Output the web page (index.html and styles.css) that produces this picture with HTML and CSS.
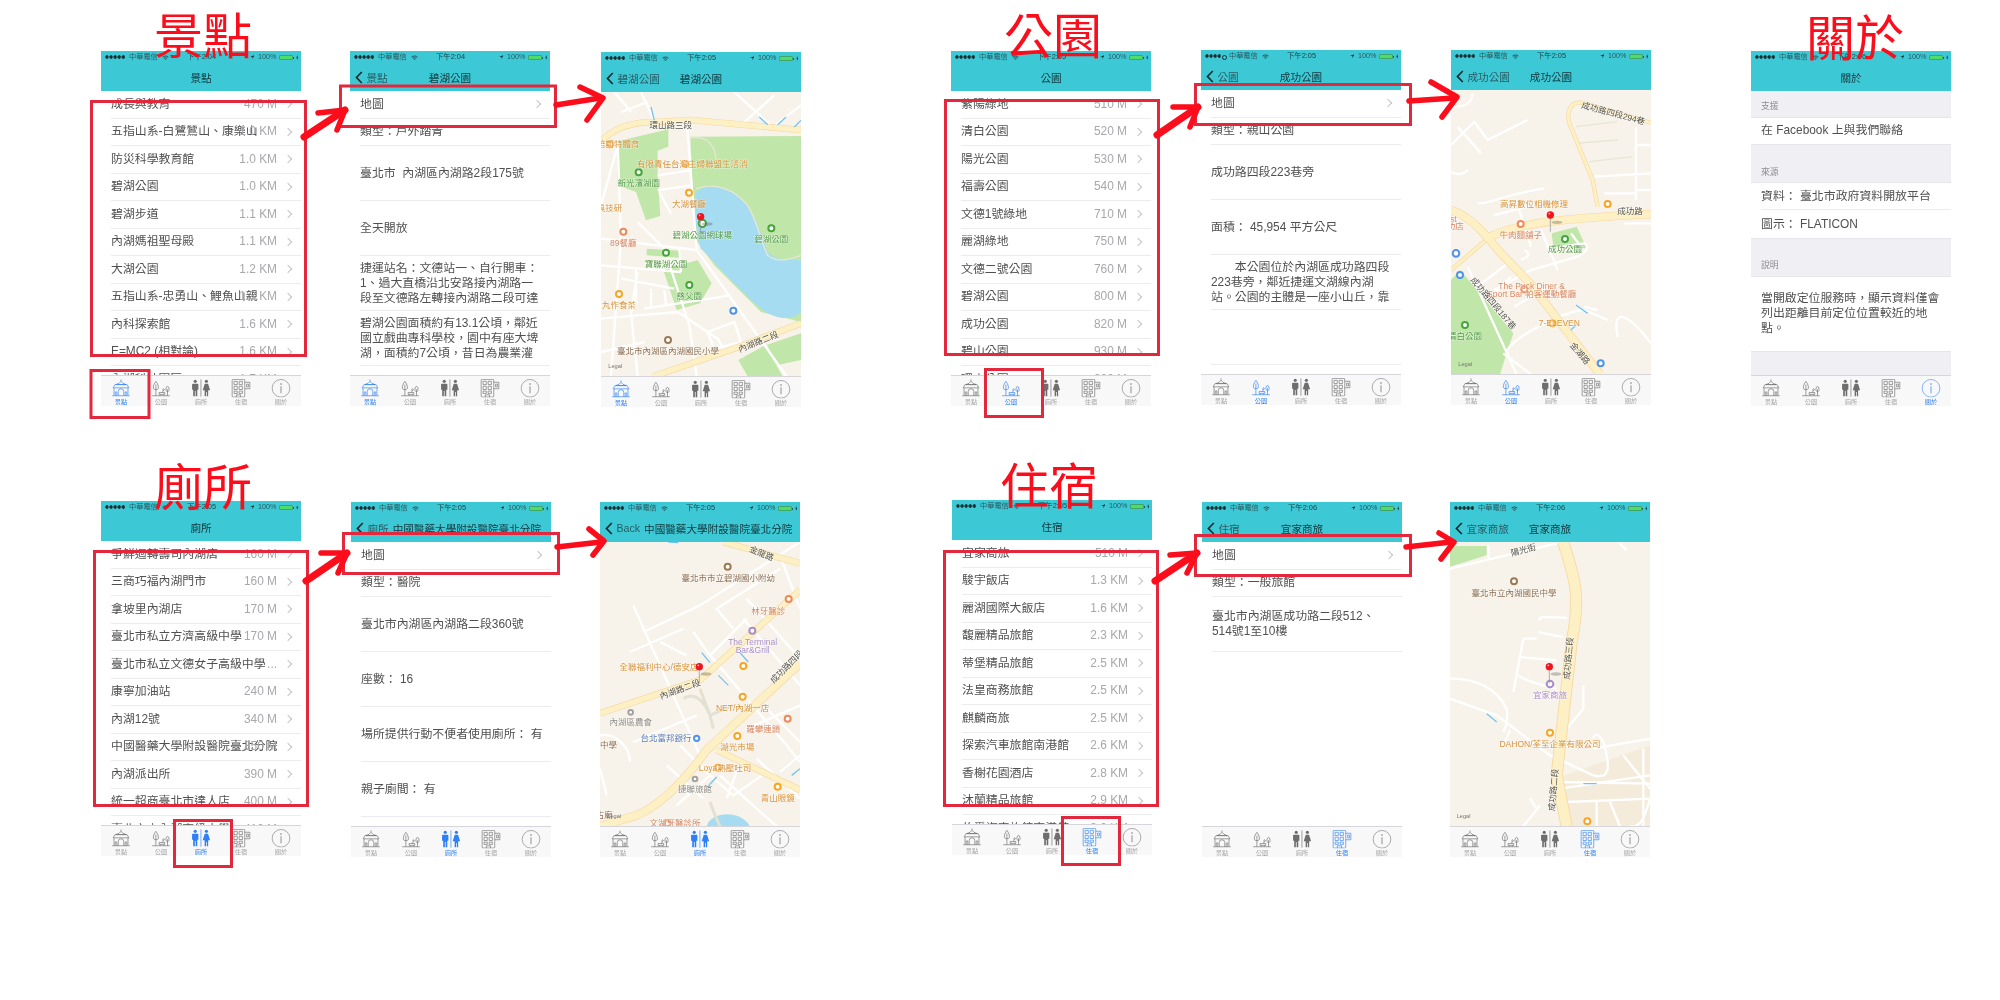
FILE: index.html
```html
<!DOCTYPE html>
<html lang="zh-Hant">
<head>
    <meta charset="UTF-8">
    <title>App 畫面流程</title>
    <link rel="stylesheet" href="styles.css">
</head>
<body>
<svg class="sprite" aria-hidden="true">
    <symbol id="i-hall" viewBox="0 0 20 20"><g fill="none" stroke="currentColor" stroke-width=".7"><path d="M10 .5V2.5M4.5 6Q8.5 5 10 2.5 11.5 5 15.5 6ZM1.5 9.5 3.5 6H16.5L18.5 9.5ZM2.5 9.5V17.5M17.5 9.5V17.5M.5 18H19.5M7 18V13.5A3 3 0 0 1 13 13.5V18M3.8 18V14A1.3 1.3 0 0 1 5.5 14V18M14.5 18V14A1.3 1.3 0 0 1 16.2 14V18"/></g></symbol>
    <symbol id="i-park" viewBox="0 0 20 20"><g fill="none" stroke="currentColor" stroke-width=".7"><path d="M4.5 2.5C6.5 5 7.5 8 7.2 10 7 12 2 12 1.8 10 1.5 8 2.5 5 4.5 2.5ZM4.5 6V18M.5 18H19.5M8 14.5H14V16.5H8ZM9 16.5V18M13 16.5V18M17 8C18.5 8 19 11 18.5 12.5 18 14 16 14 15.5 12.5 15 11 15.5 8 17 8ZM17 11V18M12 11.5A.8.8 0 1 0 12 11.4M12 12.5V14.5"/></g></symbol>
    <symbol id="i-wc" viewBox="0 0 20 20"><g fill="currentColor"><circle cx="3.8" cy="2.5" r="1.7"/><path d="M1.2 5H6.4Q7.2 5 7.2 6V11.5H6V18.5H4.2V13H3.4V18.5H1.6V11.5H.4V6Q.4 5 1.2 5Z"/><circle cx="15.8" cy="2.5" r="1.7"/><path d="M14 5H17.6L19.8 12H17.7V18.5H16.2V14H15.4V18.5H13.9V12H11.8Z"/><rect x="9.6" y=".5" width=".7" height="18.5"/></g></symbol>
    <symbol id="i-hotel" viewBox="0 0 20 20"><g fill="none" stroke="currentColor" stroke-width=".7"><rect x=".5" y=".4" width="13.5" height="19" rx="1"/><path d="M14 3.5H19.5V10.5H14M16 5.5H18V8.5H16ZM2.5 2.5H6V6H2.5ZM8 2.5H11.5V6H8ZM2.5 7.8H6V11.3H2.5ZM8 7.8H11.5V11.3H8ZM2.5 13H6V15.5H2.5ZM8 13H11.5V15.5H8ZM5 19.4V17H9.5V19.4"/></g></symbol>
    <symbol id="i-info" viewBox="0 0 20 20"><circle cx="10" cy="10" r="9.5" fill="none" stroke="currentColor" stroke-width=".6"/><circle cx="10" cy="5.3" r=".8" fill="currentColor"/><rect x="9.6" y="7.8" width=".8" height="7.5" fill="currentColor"/></symbol>
    <symbol id="i-wifi" viewBox="0 0 8 6"><path d="M.3 2Q4-1 7.7 2L7 2.8Q4 .4 1 2.8ZM1.6 3.4Q4 1.5 6.4 3.4L5.7 4.1Q4 2.9 2.3 4.1ZM3 4.8Q4 4 5 4.8L4 5.8Z" fill="currentColor"/></symbol>
    <symbol id="i-loc" viewBox="0 0 6 6"><path d="M5.8.2 .2 2.7H3.3V5.8Z" fill="currentColor"/></symbol>
    <symbol id="i-bolt" viewBox="0 0 3 6"><path d="M2 0 .2 3.3H1.3L1 6 2.8 2.6H1.7Z" fill="currentColor"/></symbol>
    <symbol id="i-back" viewBox="0 0 8 13"><path d="M6.8 1 1.5 6.5 6.8 12" fill="none" stroke="currentColor" stroke-width="1.7"/></symbol>
    <g id="m-pin">
        <ellipse class="m-shadow" cx="20" cy="22" rx="16" ry="5"/>
        <path class="m-stem" d="M0 8V50"/>
        <circle class="m-head" r="11"/>
        <circle class="m-shine" cx="-3" cy="-4" r="2.5"/>
    </g>
</svg>

<main class="sheet">
    <h1 class="tag tag-spot">景點</h1>
    <h1 class="tag tag-park">公園</h1>
    <h1 class="tag tag-about">關於</h1>
    <h1 class="tag tag-wc">廁所</h1>
    <h1 class="tag tag-hotel">住宿</h1>

    <!-- 景點 -->
    <section class="phone spot-list">
        <div class="status"><div class="st-left"><i class="signal"></i><span>中華電信</span><svg class="wifi"><use href="#i-wifi"/></svg></div><span class="clock">下午2:04</span><div class="st-right"><svg class="loc"><use href="#i-loc"/></svg><span>100%</span><i class="batt"></i><svg class="bolt"><use href="#i-bolt"/></svg></div></div>
        <header class="nav"><span></span><b class="nav-title">景點</b><span></span></header>
        <div class="body">
            <div class="row"><span class="name">成長與教育</span><span class="dist">470 M</span><i class="chev"></i></div>
            <div class="row"><span class="name">五指山系-白鷺鷥山、康樂山</span><span class="dist">1.0 KM</span><i class="chev"></i></div>
            <div class="row"><span class="name">防災科學教育館</span><span class="dist">1.0 KM</span><i class="chev"></i></div>
            <div class="row"><span class="name">碧湖公園</span><span class="dist">1.0 KM</span><i class="chev"></i></div>
            <div class="row"><span class="name">碧湖步道</span><span class="dist">1.1 KM</span><i class="chev"></i></div>
            <div class="row"><span class="name">內湖媽祖聖母殿</span><span class="dist">1.1 KM</span><i class="chev"></i></div>
            <div class="row"><span class="name">大湖公園</span><span class="dist">1.2 KM</span><i class="chev"></i></div>
            <div class="row"><span class="name">五指山系-忠勇山、鯉魚山親</span><span class="dist">1.3 KM</span><i class="chev"></i></div>
            <div class="row"><span class="name">內科探索館</span><span class="dist">1.6 KM</span><i class="chev"></i></div>
            <div class="row"><span class="name">E=MC2 (相對論)</span><span class="dist">1.6 KM</span><i class="chev"></i></div>
            <div class="row"><span class="name">內湖科技園區</span><span class="dist">1.7 KM</span><i class="chev"></i></div>
        </div>
        <nav class="tabs"><a class="tab on"><svg><use href="#i-hall"/></svg>景點</a><a class="tab"><svg><use href="#i-park"/></svg>公園</a><a class="tab"><svg><use href="#i-wc"/></svg>廁所</a><a class="tab"><svg><use href="#i-hotel"/></svg>住宿</a><a class="tab"><svg><use href="#i-info"/></svg>關於</a></nav>
    </section>

    <section class="phone spot-detail">
        <div class="status"><div class="st-left"><i class="signal"></i><span>中華電信</span><svg class="wifi"><use href="#i-wifi"/></svg></div><span class="clock">下午2:04</span><div class="st-right"><svg class="loc"><use href="#i-loc"/></svg><span>100%</span><i class="batt"></i><svg class="bolt"><use href="#i-bolt"/></svg></div></div>
        <header class="nav"><a class="back"><svg><use href="#i-back"/></svg>景點</a><b class="nav-title">碧湖公園</b><span></span></header>
        <div class="body">
            <div class="row"><span class="name">地圖</span><i class="chev"></i></div>
            <div class="row"><span class="name">類型：戶外踏青</span></div>
            <div class="row tall"><span class="name">臺北市&nbsp; 內湖區內湖路2段175號</span></div>
            <div class="row tall"><span class="name">全天開放</span></div>
            <div class="row tall"><span class="name">捷運站名：文德站一、自行開車：<br>1、過大直橋沿北安路接內湖路一<br>段至文德路左轉接內湖路二段可達</span></div>
            <div class="row tall"><span class="name">碧湖公園面積約有13.1公頃，鄰近<br>國立戲曲專科學校，園中有座大埤<br>湖，面積約7公頃，昔日為農業灌</span></div>
        </div>
        <nav class="tabs"><a class="tab on"><svg><use href="#i-hall"/></svg>景點</a><a class="tab"><svg><use href="#i-park"/></svg>公園</a><a class="tab"><svg><use href="#i-wc"/></svg>廁所</a><a class="tab"><svg><use href="#i-hotel"/></svg>住宿</a><a class="tab"><svg><use href="#i-info"/></svg>關於</a></nav>
    </section>

    <section class="phone spot-map">
        <div class="status"><div class="st-left"><i class="signal"></i><span>中華電信</span><svg class="wifi"><use href="#i-wifi"/></svg></div><span class="clock">下午2:05</span><div class="st-right"><svg class="loc"><use href="#i-loc"/></svg><span>100%</span><i class="batt"></i><svg class="bolt"><use href="#i-bolt"/></svg></div></div>
        <header class="nav"><a class="back"><svg><use href="#i-back"/></svg>碧湖公園</a><b class="nav-title">碧湖公園</b><span></span></header>
        <div class="body">
            <svg class="map" viewBox="0 0 600 853">
                <path class="m-green" d="M268 134 L600 132 V690 L480 660 L340 520 L282 440Z"/>
                <path class="m-green" d="M50 148 L202 112 V164 L170 176 L170 250 L178 372 L135 385 L105 300 L50 280Z"/>
                <path class="m-green" d="M137 470 L240 476 V498 L137 490Z"/>
                <path class="m-green" d="M187 534 L290 504 L332 574 L297 634 L227 654Z"/>
                <path class="m-green" d="M412 804 L492 760 L545 853 H440Z"/>
                <path class="m-green" d="M498 758 L600 724 V804 L527 820Z"/>
                <path class="m-water" d="M285 300 C320 270 380 285 420 320 C470 370 480 430 500 480 C530 510 570 500 600 505 V660 C570 690 520 680 480 650 C420 600 350 520 300 470 C285 440 280 340 285 300Z"/>
                <path class="m-trail" d="M268 138 C320 130 345 160 345 210M285 290 C340 270 400 290 440 340 C470 390 480 450 500 490 C530 515 570 500 600 490"/>
                <path class="m-st" d="M40 0 L90 60 M60 60 L140 30 M120 0 L160 85 M400 0 L510 100 M430 90 L520 10 M520 100 L600 40 M257 84 L287 474 L557 853 M0 340 L50 160 M50 150 L60 440 L30 853 M0 440 L287 474 M170 250 L265 235 M170 295 L270 280 M175 300 L210 365 M110 390 L190 470 L265 700 L287 853 M235 470 L240 540 M0 520 L240 540 M60 560 L220 590 M130 650 L390 610 M110 540 L90 660 L110 853 M320 720 L400 690 L420 750 L340 770Z M0 680 L110 670 L230 660 L350 740 L380 790 M0 780 L130 750 M105 530 V640 M150 590 V650 M190 595 L195 640"/>
                <path class="m-edge" d="M0 148 C40 110 70 100 120 92 L270 84 L600 114M157 853 L387 774 L600 694"/>
                <path class="m-main" d="M0 148 C40 110 70 100 120 92 L270 84 L600 114M157 853 L387 774 L600 694"/>
                <path class="m-arrow" d="M150 45 L160 85M475 75 L500 98M555 75 L530 98M600 85 L580 105"/>
                <circle class="poi o" cx="27" cy="157" r="9"/><circle class="poi o" cx="253" cy="216" r="9"/><circle class="poi o" cx="264" cy="302" r="9"/><circle class="poi o" cx="54" cy="606" r="9"/><circle class="poi r" cx="67" cy="419" r="9"/>
                <circle class="poi g" cx="113" cy="241" r="9"/><circle class="poi g" cx="511" cy="409" r="9"/><circle class="poi g" cx="195" cy="482" r="9"/><circle class="poi g" cx="265" cy="579" r="9"/><circle class="poi g" cx="304" cy="394" r="11"/>
                <circle class="poi b" cx="397" cy="656" r="9"/><circle class="poi br" cx="201" cy="744" r="9"/>
                <text class="m-l k" x="209" y="100">環山路三段</text>
                <text class="m-l o" x="52" y="157" text-anchor="start">倍斯特體育</text>
                <text class="m-l o" x="274" y="216" text-anchor="start">有限責任台灣主婦聯盟生活消</text>
                <text class="m-l g" x="113" y="274">新光濱湖園</text>
                <text class="m-l o" x="264" y="336">大湖餐廳</text>
                <text class="m-l o" x="0" y="349" text-anchor="start">禮釣具技研</text>
                <text class="m-l r" x="67" y="452">89餐廳</text>
                <text class="m-l g" x="304" y="429">碧湖公園網球場</text>
                <text class="m-l g" x="511" y="441">碧湖公園</text>
                <text class="m-l g" x="195" y="516">寶聯湖公園</text>
                <text class="m-l g" x="265" y="612">慈父園</text>
                <text class="m-l o" x="54" y="639">丸作食茶</text>
                <text class="m-l br" x="201" y="777">臺北市內湖區內湖國民小學</text>
                <text class="m-l k" transform="translate(472 749) rotate(-22)">內湖路二段</text>
                <text class="m-legal" x="22" y="827">Legal</text>
                <use href="#m-pin" x="299" y="374"/>
            </svg>
        </div>
        <nav class="tabs"><a class="tab on"><svg><use href="#i-hall"/></svg>景點</a><a class="tab"><svg><use href="#i-park"/></svg>公園</a><a class="tab"><svg><use href="#i-wc"/></svg>廁所</a><a class="tab"><svg><use href="#i-hotel"/></svg>住宿</a><a class="tab"><svg><use href="#i-info"/></svg>關於</a></nav>
    </section>

    <!-- 公園 -->
    <section class="phone park-list">
        <div class="status"><div class="st-left"><i class="signal"></i><span>中華電信</span><svg class="wifi"><use href="#i-wifi"/></svg></div><span class="clock">下午2:05</span><div class="st-right"><svg class="loc"><use href="#i-loc"/></svg><span>100%</span><i class="batt"></i><svg class="bolt"><use href="#i-bolt"/></svg></div></div>
        <header class="nav"><span></span><b class="nav-title">公園</b><span></span></header>
        <div class="body">
            <div class="row"><span class="name">紫陽綠地</span><span class="dist">510 M</span><i class="chev"></i></div>
            <div class="row"><span class="name">清白公園</span><span class="dist">520 M</span><i class="chev"></i></div>
            <div class="row"><span class="name">陽光公園</span><span class="dist">530 M</span><i class="chev"></i></div>
            <div class="row"><span class="name">福壽公園</span><span class="dist">540 M</span><i class="chev"></i></div>
            <div class="row"><span class="name">文德1號綠地</span><span class="dist">710 M</span><i class="chev"></i></div>
            <div class="row"><span class="name">麗湖綠地</span><span class="dist">750 M</span><i class="chev"></i></div>
            <div class="row"><span class="name">文德二號公園</span><span class="dist">760 M</span><i class="chev"></i></div>
            <div class="row"><span class="name">碧湖公園</span><span class="dist">800 M</span><i class="chev"></i></div>
            <div class="row"><span class="name">成功公園</span><span class="dist">820 M</span><i class="chev"></i></div>
            <div class="row"><span class="name">碧山公園</span><span class="dist">930 M</span><i class="chev"></i></div>
            <div class="row"><span class="name">環山公園</span><span class="dist">960 M</span><i class="chev"></i></div>
        </div>
        <nav class="tabs"><a class="tab"><svg><use href="#i-hall"/></svg>景點</a><a class="tab on"><svg><use href="#i-park"/></svg>公園</a><a class="tab"><svg><use href="#i-wc"/></svg>廁所</a><a class="tab"><svg><use href="#i-hotel"/></svg>住宿</a><a class="tab"><svg><use href="#i-info"/></svg>關於</a></nav>
    </section>

    <section class="phone park-detail">
        <div class="status"><div class="st-left"><i class="signal weak"></i><span>中華電信</span><svg class="wifi"><use href="#i-wifi"/></svg></div><span class="clock">下午2:05</span><div class="st-right"><svg class="loc"><use href="#i-loc"/></svg><span>100%</span><i class="batt"></i><svg class="bolt"><use href="#i-bolt"/></svg></div></div>
        <header class="nav"><a class="back"><svg><use href="#i-back"/></svg>公園</a><b class="nav-title">成功公園</b><span></span></header>
        <div class="body">
            <div class="row"><span class="name">地圖</span><i class="chev"></i></div>
            <div class="row"><span class="name">類型：親山公園</span></div>
            <div class="row tall"><span class="name">成功路四段223巷旁</span></div>
            <div class="row tall"><span class="name">面積： 45,954 平方公尺</span></div>
            <div class="row tall"><span class="name">　　本公園位於內湖區成功路四段<br>223巷旁，鄰近捷運文湖線內湖<br>站。公園的主體是一座小山丘，靠</span></div>
            <div class="row tall"></div>
        </div>
        <nav class="tabs"><a class="tab"><svg><use href="#i-hall"/></svg>景點</a><a class="tab on"><svg><use href="#i-park"/></svg>公園</a><a class="tab"><svg><use href="#i-wc"/></svg>廁所</a><a class="tab"><svg><use href="#i-hotel"/></svg>住宿</a><a class="tab"><svg><use href="#i-info"/></svg>關於</a></nav>
    </section>

    <section class="phone park-map">
        <div class="status"><div class="st-left"><i class="signal"></i><span>中華電信</span><svg class="wifi"><use href="#i-wifi"/></svg></div><span class="clock">下午2:05</span><div class="st-right"><svg class="loc"><use href="#i-loc"/></svg><span>100%</span><i class="batt"></i><svg class="bolt"><use href="#i-bolt"/></svg></div></div>
        <header class="nav"><a class="back"><svg><use href="#i-back"/></svg>成功公園</a><b class="nav-title">成功公園</b><span></span></header>
        <div class="body">
            <svg class="map" viewBox="0 0 600 853">
                <path class="m-green" d="M0 570 L27 540 L187 730 L167 790 L147 853 H0Z"/>
                <path class="m-green" d="M302 430 L377 410 L407 475 L307 470Z"/>
                <path class="m-trail" d="M375 110 L500 95M375 160 L500 150M415 215 L545 200"/>
                <path class="m-st" d="M65 10 C60 50 30 50 0 50 M0 165 L70 95 L110 150 L230 90 M20 110 L90 190 M0 245 C25 260 40 250 50 240 M555 110 V330 M555 165 H600 M430 260 L600 250 M460 310 H555 M555 300 H600 M520 400 H600 M80 340 C130 340 130 320 280 295 M195 330 L240 470 M130 375 L270 340 M330 470 L400 460 C420 470 400 490 380 500 L240 540 L130 600 M220 480 C240 490 235 500 210 510 M270 420 L320 540 M360 430 L390 470 M50 530 L200 860 M80 590 L170 520 M110 630 L180 560 M190 650 L290 590 M170 790 C150 760 340 660 400 660 L470 690 M157 790 L240 853 M400 650 L440 660 M500 740 C480 640 540 680 600 760"/>
                <path class="m-edge e-thin" d="M600 98 L400 40 C360 30 345 60 355 100 L425 270 L440 350M0 540 L117 440"/>
                <path class="m-main m-thin" d="M600 98 L400 40 C360 30 345 60 355 100 L425 270 L440 350M0 540 L117 440"/>
                <path class="m-edge e-wide" d="M117 440 C200 400 330 385 600 372M0 360 C60 380 100 430 150 490 L237 580 L447 853"/>
                <path class="m-main m-wide" d="M117 440 C200 400 330 385 600 372M0 360 C60 380 100 430 150 490 L237 580 L447 853"/>
                <path class="m-arrow" d="M375 645 L410 670M360 720 L375 705"/>
                <circle class="poi o" cx="470" cy="342" r="9"/><circle class="poi r" cx="209" cy="402" r="9"/><circle class="poi r" cx="220" cy="598" r="9"/><circle class="poi o" cx="304" cy="700" r="9"/>
                <circle class="poi g" cx="342" cy="447" r="9"/><circle class="poi g" cx="42" cy="705" r="9"/>
                <circle class="poi b" cx="27" cy="555" r="9"/><circle class="poi b" cx="15" cy="490" r="10"/><circle class="poi b" cx="449" cy="820" r="9"/>
                <text class="m-l o" x="249" y="343" text-anchor="start">高昇數位相機修理</text>
                <text class="m-l k" x="537" y="362" text-anchor="start">成功路</text>
                <text class="m-l r" x="0" y="387" text-anchor="start">ust</text>
                <text class="m-l r" x="0" y="408" text-anchor="start">成功店</text>
                <text class="m-l r" x="209" y="436">牛肉麵舖子</text>
                <text class="m-l g" x="342" y="478">成功公園</text>
                <text class="m-l r" x="242" y="588" text-anchor="start">The Puck Diner &amp;</text>
                <text class="m-l r" x="242" y="612" text-anchor="start">Sport Bar 帕客運動餐廳</text>
                <text class="m-l o" x="325" y="700" text-anchor="start">7-ELEVEN</text>
                <text class="m-l g" x="42" y="738">清白公園</text>
                <text class="m-l k" transform="translate(387 790) rotate(50)">金湖路</text>
                <text class="m-l k" transform="translate(127 640) rotate(50)">成功路四段187巷</text>
                <text class="m-l k" transform="translate(487 70) rotate(15)">成功路四段294巷</text>
                <text class="m-legal" x="22" y="827">Legal</text>
                <use href="#m-pin" x="298" y="375"/>
            </svg>
        </div>
        <nav class="tabs"><a class="tab"><svg><use href="#i-hall"/></svg>景點</a><a class="tab on"><svg><use href="#i-park"/></svg>公園</a><a class="tab"><svg><use href="#i-wc"/></svg>廁所</a><a class="tab"><svg><use href="#i-hotel"/></svg>住宿</a><a class="tab"><svg><use href="#i-info"/></svg>關於</a></nav>
    </section>

    <!-- 關於 -->
    <section class="phone about">
        <div class="status"><div class="st-left"><i class="signal"></i><span>中華電信</span><svg class="wifi"><use href="#i-wifi"/></svg></div><span class="clock">下午2:06</span><div class="st-right"><svg class="loc"><use href="#i-loc"/></svg><span>100%</span><i class="batt"></i><svg class="bolt"><use href="#i-bolt"/></svg></div></div>
        <header class="nav"><span></span><b class="nav-title">關於</b><span></span></header>
        <div class="body grouped">
            <h2 class="group-head">支援</h2>
            <div class="group"><div class="row short"><span class="name">在 Facebook 上與我們聯絡</span></div></div>
            <h2 class="group-head">來源</h2>
            <div class="group"><div class="row"><span class="name">資料： 臺北市政府資料開放平台</span></div><div class="row"><span class="name">圖示： FLATICON</span></div></div>
            <h2 class="group-head">說明</h2>
            <div class="group"><div class="row note"><span class="name">當開啟定位服務時，顯示資料僅會<br>列出距離目前定位位置較近的地<br>點。</span></div></div>
        </div>
        <nav class="tabs"><a class="tab"><svg><use href="#i-hall"/></svg>景點</a><a class="tab"><svg><use href="#i-park"/></svg>公園</a><a class="tab"><svg><use href="#i-wc"/></svg>廁所</a><a class="tab"><svg><use href="#i-hotel"/></svg>住宿</a><a class="tab on"><svg><use href="#i-info"/></svg>關於</a></nav>
    </section>

    <!-- 廁所 -->
    <section class="phone wc-list">
        <div class="status"><div class="st-left"><i class="signal"></i><span>中華電信</span><svg class="wifi"><use href="#i-wifi"/></svg></div><span class="clock">下午2:05</span><div class="st-right"><svg class="loc"><use href="#i-loc"/></svg><span>100%</span><i class="batt"></i><svg class="bolt"><use href="#i-bolt"/></svg></div></div>
        <header class="nav"><span></span><b class="nav-title">廁所</b><span></span></header>
        <div class="body">
            <div class="row"><span class="name">爭鮮迴轉壽司內湖店</span><span class="dist">160 M</span><i class="chev"></i></div>
            <div class="row"><span class="name">三商巧福內湖門市</span><span class="dist">160 M</span><i class="chev"></i></div>
            <div class="row"><span class="name">拿坡里內湖店</span><span class="dist">170 M</span><i class="chev"></i></div>
            <div class="row"><span class="name">臺北市私立方濟高級中學</span><span class="dist">170 M</span><i class="chev"></i></div>
            <div class="row"><span class="name">臺北市私立文德女子高級中學</span><span class="dist">...</span><i class="chev"></i></div>
            <div class="row"><span class="name">康寧加油站</span><span class="dist">240 M</span><i class="chev"></i></div>
            <div class="row"><span class="name">內湖12號</span><span class="dist">340 M</span><i class="chev"></i></div>
            <div class="row"><span class="name">中國醫藥大學附設醫院臺北分院</span><span class="dist">350 M</span><i class="chev"></i></div>
            <div class="row"><span class="name">內湖派出所</span><span class="dist">390 M</span><i class="chev"></i></div>
            <div class="row"><span class="name">統一超商臺北市達人店</span><span class="dist">400 M</span><i class="chev"></i></div>
            <div class="row"><span class="name">臺北市立內湖高級中學</span><span class="dist">410 M</span><i class="chev"></i></div>
        </div>
        <nav class="tabs"><a class="tab"><svg><use href="#i-hall"/></svg>景點</a><a class="tab"><svg><use href="#i-park"/></svg>公園</a><a class="tab on"><svg><use href="#i-wc"/></svg>廁所</a><a class="tab"><svg><use href="#i-hotel"/></svg>住宿</a><a class="tab"><svg><use href="#i-info"/></svg>關於</a></nav>
    </section>

    <section class="phone wc-detail">
        <div class="status"><div class="st-left"><i class="signal"></i><span>中華電信</span><svg class="wifi"><use href="#i-wifi"/></svg></div><span class="clock">下午2:05</span><div class="st-right"><svg class="loc"><use href="#i-loc"/></svg><span>100%</span><i class="batt"></i><svg class="bolt"><use href="#i-bolt"/></svg></div></div>
        <header class="nav"><a class="back"><svg><use href="#i-back"/></svg>廁所</a><b class="nav-title">中國醫藥大學附設醫院臺北分院</b><span></span></header>
        <div class="body">
            <div class="row"><span class="name">地圖</span><i class="chev"></i></div>
            <div class="row"><span class="name">類型：醫院</span></div>
            <div class="row tall"><span class="name">臺北市內湖區內湖路二段360號</span></div>
            <div class="row tall"><span class="name">座數： 16</span></div>
            <div class="row tall"><span class="name">場所提供行動不便者使用廁所： 有</span></div>
            <div class="row tall"><span class="name">親子廁間： 有</span></div>
        </div>
        <nav class="tabs"><a class="tab"><svg><use href="#i-hall"/></svg>景點</a><a class="tab"><svg><use href="#i-park"/></svg>公園</a><a class="tab on"><svg><use href="#i-wc"/></svg>廁所</a><a class="tab"><svg><use href="#i-hotel"/></svg>住宿</a><a class="tab"><svg><use href="#i-info"/></svg>關於</a></nav>
    </section>

    <section class="phone wc-map">
        <div class="status"><div class="st-left"><i class="signal"></i><span>中華電信</span><svg class="wifi"><use href="#i-wifi"/></svg></div><span class="clock">下午2:05</span><div class="st-right"><svg class="loc"><use href="#i-loc"/></svg><span>100%</span><i class="batt"></i><svg class="bolt"><use href="#i-bolt"/></svg></div></div>
        <header class="nav"><a class="back"><svg><use href="#i-back"/></svg>Back</a><b class="nav-title">中國醫藥大學附設醫院臺北分院</b><span></span></header>
        <div class="body">
            <svg class="map" viewBox="0 0 600 853">
                <path class="m-water" d="M320 853 C330 810 420 800 450 853Z"/>
                <path class="m-trail w" d="M300 440 L330 520 L400 490M250 470 C280 450 310 470 330 520 L340 560M330 780 C340 810 350 830 360 853"/>
                <path class="m-st" d="M100 190 L300 640 M130 270 L300 190 L600 0 M90 330 L250 260 M180 300 L260 340 M280 270 L330 340 L440 230 M330 340 L560 610 L600 660 M430 230 L600 430 M440 170 L600 350 M540 40 L600 200 M400 260 L350 200 L540 80 M100 600 L290 520 M0 680 L20 760 M0 580 C50 570 90 620 90 660 M230 790 L330 700 L400 760 L500 690 M330 700 L240 610 M200 670 L310 770 M360 700 L470 800 L530 853 M470 650 L600 770 M380 770 L420 660 M500 500 L600 600 M440 560 L600 490 M540 690 L600 640"/>
                <path class="m-edge" d="M0 514 L300 414 L600 144M370 0 L600 64M350 624 L600 744"/>
                <path class="m-main" d="M0 514 L300 414 L600 144M370 0 L600 64M350 624 L600 744"/>
                <path class="m-edge e-wide" d="M0 853 L110 820 C200 780 280 680 320 624 L600 364"/>
                <path class="m-main m-wide" d="M0 853 L110 820 C200 780 280 680 320 624 L600 364"/>
                <path class="m-arrow" d="M305 332 L330 362M420 332 L445 360M355 400 L385 430M350 705 L322 735M575 700 L600 680M205 0 L235 2"/>
                <circle class="poi br" cx="383" cy="74" r="9"/><circle class="poi r" cx="566" cy="171" r="9"/><circle class="poi p" cx="457" cy="266" r="9"/><circle class="poi o" cx="430" cy="372" r="9"/><circle class="poi o" cx="428" cy="464" r="9"/>
                <circle class="poi k" cx="92" cy="511" r="7"/><circle class="poi b" cx="290" cy="589" r="8"/><circle class="poi r" cx="563" cy="530" r="9"/><circle class="poi o" cx="412" cy="582" r="9"/><circle class="poi o" cx="354" cy="677" r="9"/>
                <circle class="poi k" cx="285" cy="711" r="7"/><circle class="poi o" cx="533" cy="734" r="9"/><circle class="poi r" cx="202" cy="844" r="9"/>
                <text class="m-l k" transform="translate(485 34) rotate(22)">金龍路</text>
                <text class="m-l br" x="385" y="109">臺北市市立碧湖國小附幼</text>
                <text class="m-l r" x="505" y="206" text-anchor="start">林牙醫診</text>
                <text class="m-l p" x="458" y="300">The Terminal</text>
                <text class="m-l p" x="458" y="324">Bar&amp;Grill</text>
                <text class="m-l o" x="177" y="374" text-anchor="start">全聯福利中心/德安店</text>
                <text class="m-l k" transform="translate(240 442) rotate(-20)">內湖路二段</text>
                <text class="m-l k" transform="translate(560 374) rotate(-45)">成功路四段</text>
                <text class="m-l o" x="428" y="498">NET/內湖一店</text>
                <text class="m-l gr" x="92" y="541">內湖區農會</text>
                <text class="m-l bl" x="198" y="589">台北富邦銀行</text>
                <text class="m-l br" x="0" y="609" text-anchor="start">高級中學</text>
                <text class="m-l r" x="490" y="562" text-anchor="start">羅攀連鎖</text>
                <text class="m-l o" x="412" y="616">湖光市場</text>
                <text class="m-l o" x="375" y="679" text-anchor="start">Loya熱壓吐司</text>
                <text class="m-l gr" x="285" y="742">捷聯旅館</text>
                <text class="m-l o" x="533" y="767">青山眼鏡</text>
                <text class="m-l r" x="225" y="844" text-anchor="start">文湖牙醫診所</text>
                <text class="m-l br" x="0" y="820" text-anchor="start">天古廟</text>
                <text class="m-legal" x="22" y="827">Legal</text>
                <use href="#m-pin" x="298" y="374"/>
            </svg>
        </div>
        <nav class="tabs"><a class="tab"><svg><use href="#i-hall"/></svg>景點</a><a class="tab"><svg><use href="#i-park"/></svg>公園</a><a class="tab on"><svg><use href="#i-wc"/></svg>廁所</a><a class="tab"><svg><use href="#i-hotel"/></svg>住宿</a><a class="tab"><svg><use href="#i-info"/></svg>關於</a></nav>
    </section>

    <!-- 住宿 -->
    <section class="phone hotel-list">
        <div class="status"><div class="st-left"><i class="signal"></i><span>中華電信</span><svg class="wifi"><use href="#i-wifi"/></svg></div><span class="clock">下午2:05</span><div class="st-right"><svg class="loc"><use href="#i-loc"/></svg><span>100%</span><i class="batt"></i><svg class="bolt"><use href="#i-bolt"/></svg></div></div>
        <header class="nav"><span></span><b class="nav-title">住宿</b><span></span></header>
        <div class="body">
            <div class="row"><span class="name">宜家商旅</span><span class="dist">510 M</span><i class="chev"></i></div>
            <div class="row"><span class="name">駿宇飯店</span><span class="dist">1.3 KM</span><i class="chev"></i></div>
            <div class="row"><span class="name">麗湖國際大飯店</span><span class="dist">1.6 KM</span><i class="chev"></i></div>
            <div class="row"><span class="name">馥麗精品旅館</span><span class="dist">2.3 KM</span><i class="chev"></i></div>
            <div class="row"><span class="name">蒂堡精品旅館</span><span class="dist">2.5 KM</span><i class="chev"></i></div>
            <div class="row"><span class="name">法皇商務旅館</span><span class="dist">2.5 KM</span><i class="chev"></i></div>
            <div class="row"><span class="name">麒麟商旅</span><span class="dist">2.5 KM</span><i class="chev"></i></div>
            <div class="row"><span class="name">探索汽車旅館南港館</span><span class="dist">2.6 KM</span><i class="chev"></i></div>
            <div class="row"><span class="name">香榭花園酒店</span><span class="dist">2.8 KM</span><i class="chev"></i></div>
            <div class="row"><span class="name">沐蘭精品旅館</span><span class="dist">2.9 KM</span><i class="chev"></i></div>
            <div class="row"><span class="name">伯爵汽車旅館南港館</span><span class="dist">3.0 KM</span><i class="chev"></i></div>
        </div>
        <nav class="tabs"><a class="tab"><svg><use href="#i-hall"/></svg>景點</a><a class="tab"><svg><use href="#i-park"/></svg>公園</a><a class="tab"><svg><use href="#i-wc"/></svg>廁所</a><a class="tab on"><svg><use href="#i-hotel"/></svg>住宿</a><a class="tab"><svg><use href="#i-info"/></svg>關於</a></nav>
    </section>

    <section class="phone hotel-detail">
        <div class="status"><div class="st-left"><i class="signal"></i><span>中華電信</span><svg class="wifi"><use href="#i-wifi"/></svg></div><span class="clock">下午2:06</span><div class="st-right"><svg class="loc"><use href="#i-loc"/></svg><span>100%</span><i class="batt"></i><svg class="bolt"><use href="#i-bolt"/></svg></div></div>
        <header class="nav"><a class="back"><svg><use href="#i-back"/></svg>住宿</a><b class="nav-title">宜家商旅</b><span></span></header>
        <div class="body">
            <div class="row"><span class="name">地圖</span><i class="chev"></i></div>
            <div class="row"><span class="name">類型：一般旅館</span></div>
            <div class="row tall"><span class="name">臺北市內湖區成功路二段512、<br>514號1至10樓</span></div>
        </div>
        <nav class="tabs"><a class="tab"><svg><use href="#i-hall"/></svg>景點</a><a class="tab"><svg><use href="#i-park"/></svg>公園</a><a class="tab"><svg><use href="#i-wc"/></svg>廁所</a><a class="tab on"><svg><use href="#i-hotel"/></svg>住宿</a><a class="tab"><svg><use href="#i-info"/></svg>關於</a></nav>
    </section>

    <section class="phone hotel-map">
        <div class="status"><div class="st-left"><i class="signal"></i><span>中華電信</span><svg class="wifi"><use href="#i-wifi"/></svg></div><span class="clock">下午2:06</span><div class="st-right"><svg class="loc"><use href="#i-loc"/></svg><span>100%</span><i class="batt"></i><svg class="bolt"><use href="#i-bolt"/></svg></div></div>
        <header class="nav"><a class="back"><svg><use href="#i-back"/></svg>宜家商旅</a><b class="nav-title">宜家商旅</b><span></span></header>
        <div class="body">
            <svg class="map" viewBox="0 0 600 853">
                <path class="m-tan" d="M330 705 L600 610 V853 H330Z"/>
                <path class="m-green" d="M0 12 H110 V40 L0 74Z"/>
                <path class="m-st" d="M0 80 L320 4 M115 10 V50 M505 0 L530 25 M270 235 C265 220 290 225 350 228 M265 270 L340 285 M220 290 L190 450 M220 290 H260 M210 345 L320 355 M205 400 C230 420 280 430 320 440 M180 565 L160 610 M400 430 V500 L350 560 M0 470 L140 520 L300 640 L430 700 C470 710 480 690 470 640 C460 570 430 570 430 590 M0 410 C80 410 140 440 170 500 C175 530 170 550 160 570 M430 620 L600 590 M330 720 L600 725 M350 780 L600 770 C590 800 580 860 540 853 M330 740 L600 700 M520 640 L600 740 M580 620 V853 M440 780 V853 M480 780 L510 853 M220 853 L270 790 M240 770 L260 800"/>
                <path class="m-edge e-road" d="M340 0 C370 100 395 150 365 300 L320 700 L350 853"/>
                <path class="m-main m-road" d="M340 0 C370 100 395 150 365 300 L320 700 L350 853"/>
                <path class="m-arrow" d="M110 515 L140 540M400 725 L440 725"/>
                <circle class="poi br" cx="192" cy="118" r="9"/><circle class="poi p" cx="300" cy="426" r="10"/><circle class="poi o" cx="300" cy="572" r="9"/><circle class="poi o" cx="412" cy="838" r="9"/>
                <text class="m-l k" transform="translate(220 24) rotate(-15)">陽光街</text>
                <text class="m-l br" x="192" y="152">臺北市立內湖國民中學</text>
                <text class="m-l k" transform="translate(355 349) rotate(-85)">成功路三段</text>
                <text class="m-l p" x="300" y="459">宜家商旅</text>
                <text class="m-l o" x="300" y="605">DAHON/荃至企業有限公司</text>
                <text class="m-l k" transform="translate(310 744) rotate(-85)">成功路二段</text>
                <text class="m-legal" x="20" y="827">Legal</text>
                <use href="#m-pin" x="298" y="374"/>
            </svg>
        </div>
        <nav class="tabs"><a class="tab"><svg><use href="#i-hall"/></svg>景點</a><a class="tab"><svg><use href="#i-park"/></svg>公園</a><a class="tab"><svg><use href="#i-wc"/></svg>廁所</a><a class="tab on"><svg><use href="#i-hotel"/></svg>住宿</a><a class="tab"><svg><use href="#i-info"/></svg>關於</a></nav>
    </section>

    <!-- hand-drawn notes over the screens -->
    <svg class="marks" viewBox="0 0 2000 1000">
        <rect class="box" x="91.5" y="101.5" width="214" height="254"/>
        <rect class="box" x="91" y="370.5" width="58" height="47"/>
        <rect class="box" x="340.5" y="86" width="215" height="40.5"/>
        <path class="pen thick" d="M304 137 L345 110"/><path class="pen" d="M318 113 L345 110 L337 130"/>
        <path class="pen" d="M556 105 L600 98"/><path class="pen" d="M580 87 L603 98 L587 120"/>

        <rect class="box" x="945.5" y="100.5" width="213" height="254"/>
        <rect class="box" x="985.5" y="369.5" width="57" height="47"/>
        <rect class="box" x="1195.5" y="84.5" width="215" height="40"/>
        <path class="pen thick" d="M1157 135 L1198 107"/><path class="pen" d="M1173 107 L1198 107 L1190 127"/>
        <path class="pen" d="M1409 101 L1454 98"/><path class="pen" d="M1431 82 L1457 97 L1442 117"/>

        <rect class="box" x="94.5" y="551.5" width="213" height="254"/>
        <rect class="box" x="174.5" y="820.5" width="57" height="46"/>
        <rect class="box" x="343.5" y="533.5" width="215" height="40"/>
        <path class="pen thick" d="M306 581 L347 553"/><path class="pen" d="M321 553 L347 553 L338 573"/>
        <path class="pen" d="M557 547 L601 542"/><path class="pen" d="M589 529 L604 541 L593 555"/>

        <rect class="box" x="944.5" y="551.5" width="213" height="254"/>
        <rect class="box" x="1062.5" y="817.5" width="57" height="47"/>
        <rect class="box" x="1195.5" y="535.5" width="215" height="40"/>
        <path class="pen thick" d="M1155 581 L1197 553"/><path class="pen" d="M1170 555 L1197 553 L1187 573"/>
        <path class="pen" d="M1406 547 L1451 542"/><path class="pen" d="M1439 533 L1454 542 L1441 559"/>
    </svg>
</main>
</body>
</html>
```

FILE: styles.css
```css
/* Basic Reset */
* {
    margin: 0;
    padding: 0;
    box-sizing: border-box;
}

body {
    background-color: #ffffff;
    font-family: "Liberation Sans", "Noto Sans CJK TC", sans-serif;
    overflow: hidden;
}

.sprite {
    position: absolute;
    width: 0;
    height: 0;
}

/* The sheet is a free canvas: screens and notes sit where the designer dropped them */
.sheet {
    position: relative;
    width: 2000px;
    height: 1000px;
    overflow: hidden;
}

.tag {
    position: absolute;
    z-index: 3;
    font-size: 49px;
    font-weight: 400;
    line-height: 60px;
    color: #fb0d1b;
    font-family: "Noto Sans CJK TC", sans-serif;
}

.tag-spot { left: 154px; top: 3px; }
.tag-park { left: 1004px; top: 3px; }
.tag-about { left: 1806px; top: 5px; }
.tag-wc { left: 154px; top: 454px; }
.tag-hotel { left: 1000px; top: 453px; }

.marks {
    position: absolute;
    z-index: 2;
    left: 0;
    top: 0;
    width: 2000px;
    height: 1000px;
}

.box {
    fill: none;
    stroke: #e3273d;
    stroke-width: 3;
}

.pen {
    fill: none;
    stroke: #fb0d1b;
    stroke-width: 5.5;
    stroke-linecap: round;
    stroke-linejoin: round;
}

.pen.thick {
    stroke-width: 7;
}

/* Phones */
.phone {
    position: absolute;
    width: 200px;
    height: 355px;
    display: flex;
    flex-direction: column;
    background-color: #ffffff;
    overflow: hidden;
    filter: blur(0.3px);
}

.spot-list { left: 101px; top: 51px; }
.spot-detail { left: 350px; top: 51px; }
.spot-map { left: 601px; top: 52px; }
.park-list { left: 951px; top: 51px; }
.park-detail { left: 1201px; top: 50px; }
.park-map { left: 1451px; top: 50px; }
.about { left: 1751px; top: 51px; }
.wc-list { left: 101px; top: 501px; }
.wc-detail { left: 351px; top: 502px; }
.wc-map { left: 600px; top: 502px; }
.hotel-list { left: 952px; top: 500px; }
.hotel-detail { left: 1202px; top: 502px; }
.hotel-map { left: 1450px; top: 502px; }

.status {
    flex: none;
    height: 12.5px;
    display: grid;
    grid-template-columns: 1fr auto 1fr;
    align-items: center;
    padding: 0 3px 0 4px;
    background-color: #3cc8d4;
    color: #2c5a60;
    font-size: 7.2px;
    line-height: 12.5px;
}

.st-left,
.st-right {
    display: flex;
    align-items: center;
}

.st-right {
    justify-content: flex-end;
}

.signal {
    position: relative;
    width: 20px;
    height: 4px;
    margin-right: 4px;
    background: radial-gradient(circle at 2px 2px, #1c2c30 1.5px, transparent 1.9px) 0 0 / 4.1px 4px;
}

.signal.weak {
    width: 16.4px;
    margin-right: 7.6px;
}

.signal.weak::after {
    content: "";
    position: absolute;
    left: 16.7px;
    top: 0.5px;
    width: 3px;
    height: 3px;
    border: 0.5px solid #1c2c30;
    border-radius: 50%;
}

.wifi {
    width: 7px;
    height: 5.5px;
    margin-left: 4px;
}

.clock {
    font-size: 7.4px;
    color: #1e3f44;
}

.loc {
    width: 4.5px;
    height: 4.5px;
    margin-right: 4px;
    color: #1c2c30;
}

.batt {
    position: relative;
    width: 14px;
    height: 5.5px;
    margin: 0 3px 0 2px;
    background-color: #4fdb68;
    border: 0.5px solid #3fa56a;
    border-radius: 1px;
}

.batt::after {
    content: "";
    position: absolute;
    right: -2px;
    top: 1px;
    width: 1px;
    height: 2.5px;
    background-color: #2c5a60;
}

.bolt {
    width: 2.5px;
    height: 5px;
    color: #1c2c30;
}

.nav {
    flex: none;
    height: 27.5px;
    display: grid;
    grid-template-columns: 1fr auto 1fr;
    align-items: center;
    background-color: #3cc8d4;
    font-size: 10.6px;
    white-space: nowrap;
}

.nav-title {
    font-weight: 400;
    color: #13363b;
}

.back {
    display: flex;
    align-items: center;
    padding-right: 4px;
    color: #2a5d64;
}

.back svg {
    width: 8px;
    height: 13px;
    margin: 0 3.5px 0 5px;
    color: #0f2a2e;
}

.body {
    flex: 1;
    min-height: 0;
    position: relative;
    overflow: hidden;
}

.row {
    display: flex;
    align-items: center;
    height: 27.5px;
    margin-left: 10px;
    padding-right: 9px;
    border-bottom: 0.6px solid #ececef;
    font-size: 11.9px;
    line-height: 15px;
    color: #505050;
}

.row.tall {
    height: 55px;
}

.name {
    flex: 1;
    min-width: 0;
    white-space: nowrap;
}

.dist {
    flex: none;
    color: #a8a8ac;
    margin-right: 8px;
}

.chev {
    flex: none;
    width: 6px;
    height: 6px;
    margin-right: 1px;
    border-top: 0.8px solid #c4c4c8;
    border-right: 0.8px solid #c4c4c8;
    transform: rotate(45deg);
}

/* 關於 */
.grouped {
    background-color: #efeff4;
}

.group-head {
    height: 26.7px;
    padding: 10px 0 0 10px;
    font-size: 8.9px;
    font-weight: 400;
    line-height: 11px;
    color: #8e8e93;
}

.group + .group-head {
    height: 38.7px;
    padding-top: 22.5px;
}

.group {
    background-color: #ffffff;
    box-shadow: 0 -1px 0 #e6e6ea, 0 1px 0 #e6e6ea;
}

.group .row:last-child {
    border-bottom: none;
}

.row.short {
    height: 26.6px;
}

.row.note {
    height: 74.3px;
}

/* Tab bar */
.tabs {
    flex: none;
    height: 30.6px;
    display: flex;
    background-color: #f8f8f8;
    border-top: 0.6px solid #d6d6da;
}

.tab {
    flex: 1;
    display: flex;
    flex-direction: column;
    align-items: center;
    padding-top: 2.5px;
    font-size: 6.2px;
    line-height: 8px;
    color: #a5a5a5;
}

.tab svg {
    width: 20px;
    height: 20px;
    margin-bottom: 0.5px;
    color: #6e6e6e;
}

.tab.on,
.tab.on svg {
    color: #2e80f6;
}

/* Map drawing */
.map {
    display: block;
    width: 200px;
    height: 284.4px;
    background-color: #f8f3ea;
}

.m-green { fill: #c0e6a9; }
.m-water { fill: #a6dcf2; }
.m-tan { fill: #f4ebdb; }

.m-trail {
    fill: none;
    stroke: #e6e6d4;
    stroke-width: 4;
}

.m-trail.w {
    stroke: #e3e2d2;
    stroke-width: 9;
}

.m-st {
    fill: none;
    stroke: #ffffff;
    stroke-width: 7;
    stroke-linejoin: round;
}

.m-edge,
.m-main {
    fill: none;
}

.m-edge { stroke: #f6d8a2; stroke-width: 20; }
.m-main { stroke: #fdf0c4; stroke-width: 16; }
.e-thin { stroke-width: 13; }
.m-thin { stroke-width: 9; }
.e-wide { stroke-width: 26; }
.m-wide { stroke-width: 22; }
.e-road { stroke-width: 36; }
.m-road { stroke-width: 31; }

.m-arrow {
    fill: none;
    stroke: #74c3f5;
    stroke-width: 4;
}

.m-l {
    font-size: 25.5px;
    text-anchor: middle;
    dominant-baseline: central;
    paint-order: stroke;
    stroke: rgba(255, 255, 255, 0.5);
    stroke-width: 3px;
}

.m-l.k { fill: #55544e; }
.m-l.o { fill: #d8923a; }
.m-l.r { fill: #d98660; }
.m-l.g { fill: #4f9a45; }
.m-l.br { fill: #8c6f55; }
.m-l.p { fill: #a98ecb; }
.m-l.gr { fill: #8d8d88; }
.m-l.bl { fill: #5d7fb5; }

.m-legal {
    font-size: 17px;
    fill: #77766f;
}

.poi {
    fill: #ffffff;
    stroke-width: 6;
}

.poi.o { stroke: #f5a623; }
.poi.r { stroke: #ee8a5a; }
.poi.g { stroke: #46a53c; }
.poi.b { stroke: #4f93ea; }
.poi.br { stroke: #9a7a58; }
.poi.p { stroke: #a98ecb; }
.poi.k { stroke: #a3a39e; }

.m-head { fill: #f0141e; }
.m-shine { fill: #ffc9c9; }
.m-shadow { fill: rgba(90, 90, 80, 0.35); }

.m-stem {
    stroke: #8b8b8b;
    stroke-width: 2;
}
```
